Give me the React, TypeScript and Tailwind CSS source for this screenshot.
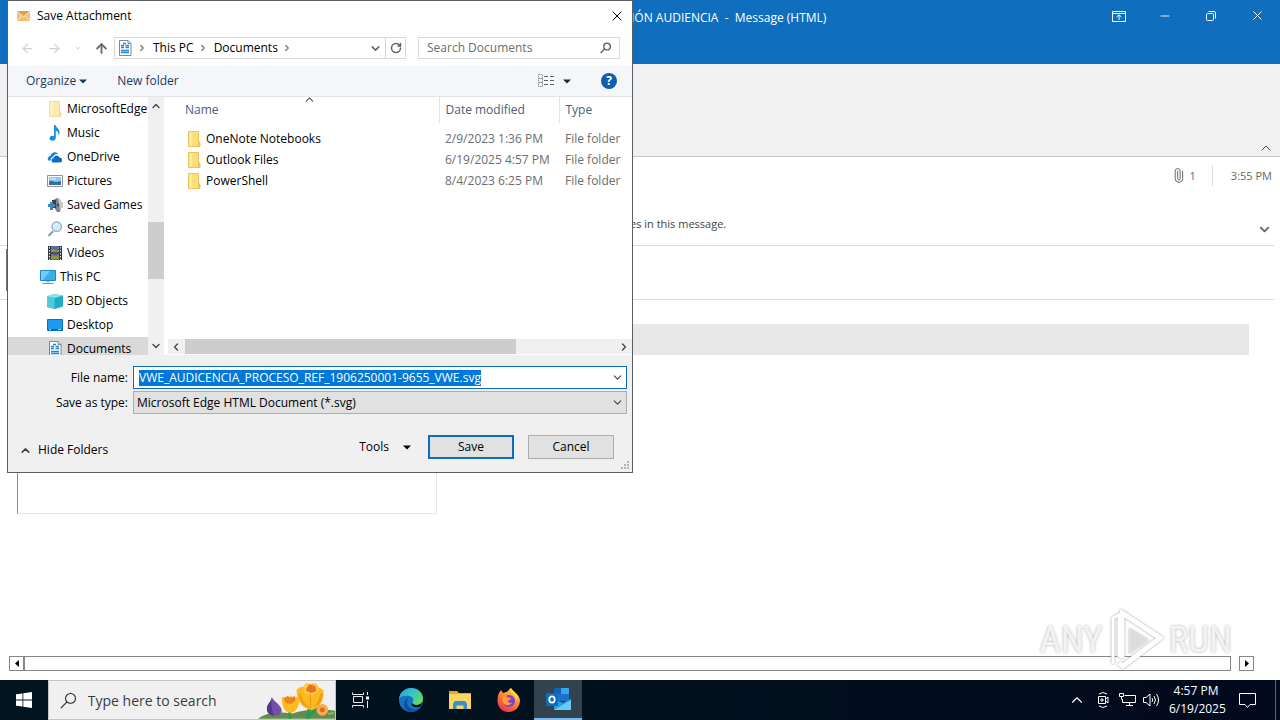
import { useEffect, useRef } from "react";
import type { ReactNode } from "react";
import { ArrowLeft, ArrowRight, ArrowUp, ChevronDown, ChevronLeft, ChevronRight, ChevronUp, Minus, Paperclip, RotateCw, X } from "lucide-react";

const FONT = "'Open Sans', 'Noto Sans', sans-serif";

/* ---------- icons ---------- */

function FolderIcon({ pale = false }: { pale?: boolean }) {
  return (
    <svg width="16" height="16" viewBox="0 0 16 16" opacity={pale ? 0.6 : 1}>
      <path d="M2.500.5h10v10l1.500 1v4H2.500z" fill="#fbdf7c" stroke="#e9c65c" />
      <path d="M12 10.500h2v5h-2z" fill="#f0c850" />
      <path d="M3 1h3v14H3z" fill="#fde99a" />
    </svg>
  );
}

function DocumentIcon() {
  return (
    <svg width="16" height="16" viewBox="0 0 16 16">
      <path d="M2.500.5h8.500l3 3v12H2.500z" fill="#fff" stroke="#7c8a94" />
      <path d="M11 .5v3h3" fill="none" stroke="#7c8a94" />
      <path d="M4 5.500h3M4 7.500h3M8.500 5.500H12M8.500 7.500H12M4 10.500h8M4 12.500h8M6 3.500h3" stroke="#1d86d4" strokeWidth="1.300" />
    </svg>
  );
}

function MusicIcon() {
  return (
    <svg width="16" height="16" viewBox="0 0 16 16">
      <path d="M7 0h1.500c.3 2.500 4.500 3.600 4 8-.1.900-.6 1.800-1.200 2.400.6-2.600-.6-4-2.500-4.600v7c0 1.700-1.500 3-3.400 3S2.500 14.800 2.500 13.300s1.400-2.600 3-2.600c.6 0 1 .1 1.500.3z" fill="#1d8fe1" />
    </svg>
  );
}

function OneDriveIcon() {
  return (
    <svg width="16" height="16" viewBox="0 0 16 16">
      <path d="M1 11.500C.3 8.700 2 7 3.500 6.800 4.200 3.500 8.500 1.800 11.300 5 8 4.500 6.500 6.500 6 8c-2 .3-2.500 2-2.200 3.500z" fill="#1a86d8" />
      <path d="M6.500 13.500c-2.400 0-2.800-4 0-4.300C7 6 11 5.200 12.500 8.500c3.400.2 3.400 4.800.5 5z" fill="#0a6cc4" />
    </svg>
  );
}

function PicturesIcon() {
  return (
    <svg width="16" height="16" viewBox="0 0 16 16">
      <path d="M.5 2.500h15v11H.5z" fill="#fff" stroke="#8b949c" />
      <path d="M2 4h12v8H2z" fill="#8cc9f2" />
      <path d="M2 8.500c3-2 5 .5 7 .5s3-1 5-.5V12H2z" fill="#3b6f93" />
      <path d="M3 5.500h6v1H3z" fill="#e6f5ff" />
    </svg>
  );
}

function SavedGamesIcon() {
  return (
    <svg width="16" height="16" viewBox="0 0 16 16">
      <path d="M7 2.500 10 1l3 1 1 3 2 1v4l-2 1-1 4h-3l-2-3z" fill="#7d868e" />
      <path d="M11 1.500 13 2l1 3 2 1v4l-2 1-1 3z" fill="#c5cbd0" />
      <path d="M5 3h4v8H5z" fill="#39434c" />
      <path d="M1 7h2V5h3v2h2v3H6v3H3v-3H1z" fill="#4688bd" />
      <circle cx="11" cy="8" r="1.500" fill="#4a535b" />
    </svg>
  );
}

function SearchesIcon() {
  return (
    <svg width="16" height="16" viewBox="0 0 16 16">
      <path d="M1.500 15 6 10.200" stroke="#8d9aa5" strokeWidth="2" />
      <circle cx="9.700" cy="5.700" r="4.700" fill="#d3ecfb" stroke="#8fb2cb" strokeWidth="1.400" />
      <path d="M7 5c.5-1.500 2-2.300 3.500-2" stroke="#fff" fill="none" />
    </svg>
  );
}

function VideosIcon() {
  return (
    <svg width="16" height="16" viewBox="0 0 16 16">
      <path d="M1 1h14v14H1z" fill="#333b45" />
      <path d="M4 1h8v14H4z" fill="#5b69b5" />
      <path d="M4 4.500c3-2 5 3 8 0V8H4zM4 11c3-2 5 2 8-1v4H4z" fill="#92963a" />
      <path d="M4 8h8" stroke="#20262d" />
      <path d="M2.500 2v13M13.500 2v13" stroke="#dfe5ea" strokeDasharray="1.500 1.500" />
    </svg>
  );
}

function ThisPcIcon() {
  return (
    <svg width="16" height="16" viewBox="0 0 16 16">
      <path d="M.5 1.500h15v10H.5z" fill="#38b0ee" stroke="#2085c4" />
      <path d="M1 2h9L3 11H1z" fill="#6fcdf8" />
      <path d="M6 12h4v1.500H6z" fill="#a9c5d6" />
      <path d="M2 14.500h12" stroke="#8595a0" />
    </svg>
  );
}

function ObjectsIcon() {
  return (
    <svg width="16" height="16" viewBox="0 0 16 16">
      <path d="M0 3.500 7 1l9 1.500v11L8 16l-8-2z" fill="#22acc4" />
      <path d="M0 3.500 7 1l9 1.500L7.500 5z" fill="#8ae3ec" />
      <path d="M0 3.500 7.500 5v11L0 14z" fill="#4fcbdc" />
    </svg>
  );
}

function DesktopIcon() {
  return (
    <svg width="16" height="16" viewBox="0 0 16 16">
      <path d="M.5 2.500h15v11H.5z" fill="#1e9bf0" stroke="#0f6fb8" />
      <path d="M1 12.500h14" stroke="#0c5c9c" />
      <path d="M2 12.500h2M11 12.500h3" stroke="#9ad4fa" />
    </svg>
  );
}

function MailIcon() {
  return (
    <svg width="13" height="10" viewBox="0 0 13 10">
      <path d="M0 0h13v10H0z" fill="#f3bd6c" />
      <path d="M0 0l6.500 5L13 0" fill="#e79d45" />
      <path d="M0 .5 6.500 6 13 .5M0 10l4.500-5M13 10 8.500 5" fill="none" stroke="#fdeed6" />
    </svg>
  );
}

function SearchGlyph({ size, stroke, width = 1 }: { size: number; stroke: string; width?: number }) {
  return (
    <svg width={size} height={size} viewBox="0 0 16 16" fill="none" stroke={stroke} strokeWidth={width}>
      <circle cx="10" cy="6" r="4.700" />
      <path d="M6.600 9.400.8 15.200" />
    </svg>
  );
}

function Triangle() {
  return (
    <svg width="8" height="5" viewBox="0 0 8 5">
      <path d="M0 .5h8l-4 4z" fill="currentColor" />
    </svg>
  );
}

function ViewIcon() {
  return (
    <svg width="17" height="14" viewBox="0 0 17 14" fill="none" stroke="#8a8f96">
      <path d="M.5.5h4v4h-4zM.5 4.500h4v4h-4zM.5 8.500h4v4h-4z" strokeDasharray="1.500 .7" />
      <path d="M6 2.500h4M12 2.500h4M6 6.500h4M12 6.500h4M6 10.500h4M12 10.500h4" stroke="#5f656c" />
    </svg>
  );
}

function Flowers() {
  return (
    <svg width="78" height="38" viewBox="0 0 78 38">
      <path d="M0 38c8-6 20-8 34-5 14-5 30-6 44-3v8z" fill="#628c4e" />
      <path d="M32 38c1-5 0-8-1-12M50 38c1-8 2-10 3-16M51 37c4-6 8-9 12-11" stroke="#2f9a50" strokeWidth="3" fill="none" />
      <path d="M14 16c2 5 10 8 10 14-1 4-5 5-8 5-4-1-7-3-7-7 0-5 4-6 5-12z" fill="#7650a6" />
      <path d="M14 16c-1 8 0 13 2 19-4-1-7-3-7-7 0-5 4-6 5-12z" fill="#573886" />
      <path d="M24 17c3-2 5-1 6 1l3-4 3 4c2-3 4-3 6-1 0 9-4 15-9 15-6 0-9-7-9-15z" fill="#fdbb22" />
      <path d="M26 17l4-2 3 2 4-2 1 4-4 4-6-1z" fill="#ee8420" />
      <path d="M39 9c3-3 5-4 7-3 1-4 4-4 7-3 4-2 7-1 8 3l5 3c1 11-4 19-12 20-9-1-15-9-15-20z" fill="#fdb91e" />
      <path d="M45 6l4-4 5 2 4-1 4 6-7 6-8-3z" fill="#ffce45" />
      <path d="M49 7l3-4 6 2 1 5-5 2-5-2z" fill="#e9731f" />
      <path d="M43 12c2 7 5 12 10 15-7-1-11-6-12-13zM63 12c-1 6-3 11-7 14 6-1 9-6 10-13z" fill="#f49d17" />
      <path d="M53 13v14" stroke="#e8941a" />
      <circle cx="65" cy="29" r="6" fill="#f8aa4c" />
      <circle cx="65" cy="29" r="2.500" fill="#dd6d1e" />
      <path d="M71 33l6-1" stroke="#8cbf62" strokeWidth="2" />
    </svg>
  );
}

function WindowsLogo() {
  return (
    <svg width="16" height="16" viewBox="0 0 16 16" fill="#fff">
      <path d="M0 2.300 6.500 1.400v6.200H0zM7.300 1.300 16 0v7.600H7.300zM0 8.400h6.500v6.200L0 13.700zM7.300 8.400H16V16l-8.700-1.300z" />
    </svg>
  );
}

function TaskViewIcon() {
  return (
    <svg width="17" height="16" viewBox="0 0 17 16" fill="none" stroke="#e8ecee">
      <path d="M.5.5v2h11v-2M.5 15.500v-2h11v2M1.500 4.500h9v6h-9zM15.500 0v3M15.500 9v7" />
      <path d="M14 4.500h3v3h-3z" fill="#fff" stroke="none" />
    </svg>
  );
}

function EdgeIcon() {
  return (
    <svg width="24" height="24" viewBox="0 0 24 24">
      <defs>
        <linearGradient id="edgeTop" x1="0" y1="0" x2="1" y2=".6">
          <stop offset="0" stopColor="#279fdb" />
          <stop offset=".6" stopColor="#38c9c0" />
          <stop offset="1" stopColor="#67d957" />
        </linearGradient>
      </defs>
      <circle cx="12" cy="12" r="12" fill="#1573c4" />
      <path d="M0 11C1 4 6 0 12 0c7 0 12 5 12 10.500 0 4-3 6.500-6.500 6.500-3 0-4.500-1.300-4-2.300 1.800-2 1-6.200-3.500-6.700C6 7.500 1.500 8 0 11z" fill="url(#edgeTop)" />
      <path d="M9.500 10C6.500 13 8 20 14 21.500c3 .7 6-.5 8-3C19 24 12 25 8 22.500 3.500 19.500 4 12 9.500 10z" fill="#0f4f99" />
      <path d="M13.500 14.700c-.5 1 1 2.300 4 2.300 2.500 0 4.500-1 5.600-2.500-.2 1.500-.7 2.800-1.500 4-5 2.500-11-1-8.100-3.800z" fill="#02141f" />
    </svg>
  );
}

function ExplorerIcon() {
  return (
    <svg width="22" height="18" viewBox="0 0 22 18">
      <path d="M0 0h8l2 2h12v16H0z" fill="#e9a52c" />
      <path d="M0 3h22v15H0z" fill="#fcd462" />
      <path d="M4 18v-5.500L6 10h10l2 2.500V18h-3.500v-3.500h-7V18z" fill="#3a8fd0" />
    </svg>
  );
}

function FirefoxIcon() {
  return (
    <svg width="24" height="24" viewBox="0 0 24 24">
      <defs>
        <linearGradient id="foxBody" x1=".8" y1="0" x2=".2" y2="1">
          <stop offset="0" stopColor="#ffe24a" />
          <stop offset=".45" stopColor="#ff8c2b" />
          <stop offset="1" stopColor="#f0285c" />
        </linearGradient>
      </defs>
      <path d="M2 5l2-3 2 3 3-1c2 0 3-3 5-4 1 4 8 5 9 12 0 7-5 12-11.500 12S.500 19 .500 13C.500 9 1 7 2 5z" fill="url(#foxBody)" />
      <circle cx="12" cy="13" r="6" fill="#7a43d6" />
      <path d="M6 9c2-2 4-1 5 .5l3 .5c0 2-2 2-3 2.500 0 2 2 3 4 2-1 3-7 4-9 0-1-2-1-4 0-5.500z" fill="#ff9a2e" />
      <path d="M14 4c3 2 5 5 5 8l2-3c0-3-4-5-7-9z" fill="#ffd93f" />
    </svg>
  );
}

function OutlookIcon() {
  return (
    <svg width="25" height="22" viewBox="0 0 25 22">
      <path d="M8 0h15v13H8z" fill="#1a73c8" />
      <path d="M15 0h8v6h-8z" fill="#35a6ee" />
      <path d="M8 0h7v6H8z" fill="#1462ae" />
      <path d="M8 11l9 4 8-4v11H8z" fill="#2aa0e2" />
      <path d="M8 22l17-10v10z" fill="#67cdf5" />
      <path d="M0 5h12v13H0z" fill="#0f6cbd" />
      <ellipse cx="6" cy="11.500" rx="2.700" ry="3.200" fill="none" stroke="#fff" strokeWidth="1.800" />
    </svg>
  );
}

/* ---------- save dialog ---------- */

const treeItems: { label: string; icon: ReactNode; root?: boolean; active?: boolean }[] = [
  { label: "MicrosoftEdge", icon: <FolderIcon pale /> },
  { label: "Music", icon: <MusicIcon /> },
  { label: "OneDrive", icon: <OneDriveIcon /> },
  { label: "Pictures", icon: <PicturesIcon /> },
  { label: "Saved Games", icon: <SavedGamesIcon /> },
  { label: "Searches", icon: <SearchesIcon /> },
  { label: "Videos", icon: <VideosIcon /> },
  { label: "This PC", icon: <ThisPcIcon />, root: true },
  { label: "3D Objects", icon: <ObjectsIcon /> },
  { label: "Desktop", icon: <DesktopIcon /> },
  { label: "Documents", icon: <DocumentIcon />, active: true },
];

const folders = [
  { name: "OneNote Notebooks", modified: "2/9/2023 1:36 PM" },
  { name: "Outlook Files", modified: "6/19/2025 4:57 PM" },
  { name: "PowerShell", modified: "8/4/2023 6:25 PM" },
];

function AddressBar() {
  return (
    <div className="flex h-9 items-center px-3">
      <div className="flex w-[94px] items-center gap-3 text-[#d2d2d2]">
        <button aria-label="Back"><ArrowLeft size={15} /></button>
        <button aria-label="Forward"><ArrowRight size={15} /></button>
        <button aria-label="Recent locations"><ChevronDown size={8} strokeWidth={3} /></button>
        <button aria-label="Up" className="text-[#6b6b6b]"><ArrowUp size={15} strokeWidth={3} /></button>
      </div>
      <div className="flex h-[22px] flex-1 items-center border border-[#d9d9d9] pl-0.5">
        <DocumentIcon />
        <ChevronRight size={10} strokeWidth={3} className="ml-1 text-[#777]" />
        <button className="ml-1.5">This PC</button>
        <ChevronRight size={10} strokeWidth={3} className="ml-1 text-[#777]" />
        <button className="ml-1.5">Documents</button>
        <ChevronRight size={10} strokeWidth={3} className="ml-1 text-[#777]" />
        <button aria-label="Previous locations" className="ml-auto mr-[3px] text-[#666]">
          <ChevronDown size={13} strokeWidth={3} />
        </button>
        <button aria-label="Refresh" className="flex h-full w-5 items-center justify-center border-l border-[#d9d9d9] text-[#666]">
          <RotateCw size={12} strokeWidth={3} />
        </button>
      </div>
      <div className="ml-3 flex h-[22px] w-[202px] items-center border border-[#d9d9d9] px-2">
        <input aria-label="Search Documents" placeholder="Search Documents" className="w-full min-w-0 outline-none placeholder:text-[#6d6d6d]" />
        <SearchGlyph size={12} stroke="#666" width={2} />
      </div>
    </div>
  );
}

function FolderTree() {
  return (
    <nav className="flex w-[156px] shrink-0">
      <ul className="w-[140px] overflow-hidden">
        {treeItems.map((item) => (
          <li key={item.label} className={item.active ? "bg-[#d9d9d9]" : ""}>
            <button className={`flex h-6 items-center gap-1 whitespace-nowrap ${item.root ? "pl-8" : "pl-[39px]"}`}>
              {item.icon}
              {item.label}
            </button>
          </li>
        ))}
      </ul>
      <div className="flex w-4 flex-col items-center bg-[#f0f0f0] text-[#505050]">
        <ChevronUp size={12} strokeWidth={3} className="mt-[3px]" />
        <div className="mt-[110px] h-[57px] w-full bg-[#cdcdcd]" />
        <ChevronDown size={12} strokeWidth={3} className="mb-[3px] mt-auto" />
      </div>
    </nav>
  );
}

function FileList() {
  return (
    <div className="flex min-w-0 flex-1 flex-col justify-between">
      <table className="w-full table-fixed border-collapse text-left">
        <thead className="text-[#4c607a]">
          <tr className="h-[26px]">
            <th className="relative pl-[21px] font-normal">
              Name
              <ChevronUp size={13} strokeWidth={2} className="absolute left-[139px] top-[-4px] text-[#555]" />
            </th>
            <th className="w-[120px] border-l border-[#e5e5e5] pl-1.5 font-normal">Date modified</th>
            <th className="w-[73px] border-l border-[#e5e5e5] pl-1.5 font-normal">Type</th>
          </tr>
        </thead>
        <tbody className="whitespace-nowrap text-[#6d6d6d] before:block before:h-[5px]">
          {folders.map((f) => (
            <tr key={f.name} className="h-[21px]">
              <td className="pl-[22px]">
                <div className="flex items-center gap-1 text-black">
                  <FolderIcon />
                  {f.name}
                </div>
              </td>
              <td className="pl-1.5">{f.modified}</td>
              <td className="pl-1.5">File folder</td>
            </tr>
          ))}
        </tbody>
      </table>
      <div className="mb-px ml-1 flex h-[15px] items-center bg-[#f0f0f0] text-[#505050]">
        <ChevronLeft size={12} strokeWidth={3} className="ml-0.5 mr-[3px]" />
        <div className="h-full w-[331px] bg-[#cdcdcd]" />
        <ChevronRight size={12} strokeWidth={3} className="ml-auto mr-0.5" />
      </div>
    </div>
  );
}

function SaveDialog() {
  const nameRef = useRef<HTMLInputElement>(null);

  useEffect(() => {
    nameRef.current?.focus();
    nameRef.current?.select();
  }, []);

  return (
    <div role="dialog" aria-label="Save Attachment" className="absolute left-[7px] top-0 w-[626px] border border-[#5a5f66] bg-white text-[12px] leading-4 text-black">
      <header className="flex h-[29px] items-center gap-[7px] pl-[9px] pr-[7px]">
        <MailIcon />
        <h2>Save Attachment</h2>
        <button aria-label="Close" className="ml-auto"><X size={16} strokeWidth={1.500} /></button>
      </header>

      <AddressBar />

      <div className="flex h-[31px] items-center border-b border-[#e5e5e5] bg-[#f4f6f9] pl-[18px] pr-[15px] text-[#1e395b]">
        <button className="flex items-center gap-[3px]">Organize <Triangle /></button>
        <button className="ml-[30px]">New folder</button>
        <button aria-label="Change view" className="ml-auto flex items-center gap-2 text-[#1e2a3b]">
          <ViewIcon />
          <Triangle />
        </button>
        <button aria-label="Help" className="ml-[30px] flex size-4 items-center justify-center rounded-full bg-[#0f5fae] text-[12px] font-bold text-white">?</button>
      </div>

      <div className="flex h-[258px] overflow-hidden">
        <FolderTree />
        <FileList />
      </div>

      <form className="bg-[#f0f0f0] pt-[11px]" onSubmit={(e) => e.preventDefault()}>
        <div className="grid grid-cols-[120px_1fr] items-center gap-x-[5px] gap-y-0.5 pr-[5px]">
          <label htmlFor="file-name" className="text-right">File name:</label>
          <div className="flex h-[23px] items-center border border-[#0f6cbd] bg-white pl-[5px] pr-0.5">
            <input
              id="file-name"
              ref={nameRef}
              defaultValue="VWE_AUDICENCIA_PROCESO_REF_1906250001-9655_VWE.svg"
              className="h-4 min-w-0 flex-1 outline-none selection:bg-[#0078d7] selection:text-white"
            />
            <ChevronDown size={13} className="text-[#444]" />
          </div>
          <label htmlFor="file-type" className="text-right">Save as type:</label>
          <div className="relative">
            <select id="file-type" className="block h-[23px] w-full appearance-none border border-[#adadad] bg-[#e1e1e1] pl-[3px]">
              <option>Microsoft Edge HTML Document (*.svg)</option>
            </select>
            <ChevronDown size={13} className="pointer-events-none absolute right-[3px] top-[5px] text-[#444]" />
          </div>
        </div>

        <div className="flex h-[58px] items-center pl-[11px] pr-[18px] pt-2">
          <button type="button" className="flex items-center gap-[6px] pt-1.5">
            <ChevronUp size={13} strokeWidth={3} className="text-[#444]" />
            Hide Folders
          </button>
          <button type="button" className="ml-auto flex items-center gap-[14px]">Tools <Triangle /></button>
          <button type="submit" className="ml-[17px] h-6 w-[86px] border-2 border-[#0f6cbd] bg-[#e1e1e1]">Save</button>
          <button type="button" className="ml-3.5 h-6 w-[86px] border border-[#adadad] bg-[#e1e1e1]">Cancel</button>
        </div>
      </form>
      <svg width="9" height="9" viewBox="0 0 9 9" fill="#b4b4b4" className="absolute bottom-0.5 right-0.5">
        <path d="M6 0h2v2H6zM3 3h2v2H3zM6 3h2v2H6zM0 6h2v2H0zM3 6h2v2H3zM6 6h2v2H6z" />
      </svg>
    </div>
  );
}

/* ---------- message window ---------- */

function MessageWindow() {
  return (
    <div className="flex flex-1 flex-col bg-white">
      <header className="flex h-16 items-start bg-[#106ebe] pr-[15px] text-white">
        <h1 className="whitespace-pre pl-[631px] pt-2.5 text-[12px] leading-4">IÓN AUDIENCIA  -  Message (HTML)</h1>
        <div className="ml-auto flex items-center gap-8 pt-2">
          <button aria-label="Ribbon display options">
            <svg width="14" height="14" viewBox="0 0 14 14" fill="none" stroke="#fff">
              <path d="M.5 2.500h13v10H.5zM.5 4.500h13M7 11V6M4.500 8 7 5.800 9.500 8" />
            </svg>
          </button>
          <button aria-label="Minimize"><Minus size={14} strokeWidth={1.500} /></button>
          <button aria-label="Restore">
            <svg width="14" height="14" viewBox="0 0 14 14" fill="none" stroke="#fff">
              <rect x="2.500" y="4.500" width="7" height="7" rx="1" />
              <path d="M4.500 2.500h5.500q1.500 0 1.500 1.500v5.500" />
            </svg>
          </button>
          <button aria-label="Close window"><X size={15} strokeWidth={1.500} /></button>
        </div>
      </header>

      <div className="flex h-[93px] items-end justify-end border-b border-[#c8c8c8] bg-[#f1f1f1] pr-1.5">
        <button aria-label="Collapse ribbon"><ChevronUp size={16} strokeWidth={1.500} className="text-[#444]" /></button>
      </div>

      <section className="mr-1.5 flex h-[89px] flex-col justify-between border-b border-[#dcdcdc] pb-2 pr-0.5 pt-2 text-[11px] leading-4 text-[#666]">
        <div className="flex items-center justify-end">
          <Paperclip size={15} strokeWidth={1.500} className="-rotate-45" />
          <span className="ml-1">1</span>
          <time className="ml-4 flex h-[21px] items-center border-l border-[#dcdcdc] pl-[18px]">3:55 PM</time>
        </div>
        <div className="flex items-end pl-[630px]">
          <p className="pb-[5px] text-[#444]">es in this message.</p>
          <button aria-label="Expand header" className="ml-auto"><ChevronDown size={15} strokeWidth={3} /></button>
        </div>
      </section>

      <div className="mr-1.5 h-[54px] border-b border-[#dcdcdc] pl-1.5 pt-[3px]">
        <div className="h-[42px] w-40 border border-[#777]" />
      </div>

      <div className="flex flex-1 flex-col pt-6">
        <div className="ml-[17px] mr-[31px] h-[31px] bg-[#e8e8e8]" />
        <div className="ml-[17px] mt-10 h-[119px] w-[420px] border-b border-l border-r border-[#e8e8e8] border-l-[#8f8f8f]" />
        <div className="mb-[9px] ml-[9px] mr-[26px] mt-auto flex h-[15px]">
          <button aria-label="Scroll left" className="flex w-[15px] items-center justify-center border border-[#868686]">
            <svg width="4" height="7" viewBox="0 0 4 7"><path d="M4 0v7L0 3.500z" /></svg>
          </button>
          <div className="mr-2 flex-1 border border-[#868686] bg-white" />
          <button aria-label="Scroll right" className="flex w-[15px] items-center justify-center border border-[#868686]">
            <svg width="4" height="7" viewBox="0 0 4 7"><path d="M0 0v7l4-3.500z" /></svg>
          </button>
        </div>
      </div>
    </div>
  );
}

function Watermark() {
  return (
    <div
      className="pointer-events-none absolute bottom-2 right-12 flex items-center gap-1 text-[37px] leading-[60px] text-white/80 [text-shadow:0_0_3px_#aaa]"
      style={{ fontFamily: "'Roboto Condensed', 'Liberation Sans Narrow', sans-serif" }}
    >
      ANY
      <svg width="58" height="64" viewBox="0 0 58 64" fill="none" className="drop-shadow-[0_0_1px_#999]">
        <path d="M6 56V10l6-3v42" stroke="#fff" strokeWidth="3" />
        <path d="M15 50V5l38 25-37 28-4-3" stroke="#fff" strokeWidth="5" />
        <path d="M22 20v26l20-14z" fill="#e8e8e8" opacity=".8" />
      </svg>
      RUN
    </div>
  );
}

/* ---------- taskbar ---------- */

function Taskbar() {
  return (
    <footer className="flex h-10 items-center bg-linear-to-r from-[#02151e] to-[#010a1c] text-white">
      <button aria-label="Start" className="flex h-full w-12 items-center justify-center"><WindowsLogo /></button>
      <label className="flex h-full w-72 items-center border border-[#c4c4c4] bg-[#f0f0f0] pl-[11px]">
        <SearchGlyph size={17} stroke="#222" />
        <input
          aria-label="Type here to search"
          placeholder="Type here to search"
          className="ml-[11px] w-[170px] text-[14px] text-black outline-none placeholder:text-[#3c3c3c]"
        />
        <Flowers />
      </label>
      <button aria-label="Task view" className="flex h-full w-12 items-center justify-center"><TaskViewIcon /></button>
      <button aria-label="Microsoft Edge" className="ml-0.5 flex h-full w-[49px] items-center justify-center"><EdgeIcon /></button>
      <button aria-label="File Explorer" className="flex h-full w-[49px] items-center justify-center"><ExplorerIcon /></button>
      <button aria-label="Firefox" className="flex h-full w-[49px] items-center justify-center"><FirefoxIcon /></button>
      <button aria-label="Outlook" className="ml-px flex h-full w-12 items-center justify-center border-b-2 border-[#76b9ed] bg-[#33434d]"><OutlookIcon /></button>

      <div className="ml-auto flex h-full items-center">
        <button aria-label="Show hidden icons" className="mr-[9px]"><ChevronUp size={18} strokeWidth={1.500} /></button>
        <svg width="16" height="18" viewBox="0 0 16 18" fill="none" stroke="#fff" className="mr-2">
          <path d="M3.500 5.500h7v7h-7zM10.500 8l2.500-2v6l-2.500-2M4 3q4-3 8 0M4 15q4 3 8 0M6 8h2v2H6z" />
        </svg>
        <svg width="17" height="16" viewBox="0 0 17 16" fill="none" stroke="#fff" className="mr-[7px]">
          <path d="M5.500 3.500h11v7H3.500V7M10.500 10.500v3M7 13.500h7M.5 1.500h4v3h-4zM2.500 4.500v3" />
        </svg>
        <svg width="17" height="16" viewBox="0 0 17 16" fill="none" stroke="#fff" className="mr-[9px]">
          <path d="M.5 5.500h2.500l4-3.500v12l-4-3.500H.5zM9 6q1.500 2 0 4M11 4q3 4 0 8M13.500 2q4 6 0 12" />
        </svg>
        <time className="w-[54px] text-center text-[12px] leading-[18px]">
          4:57 PM
          <br />
          6/19/2025
        </time>
        <button aria-label="Notifications" className="ml-4 mr-[19px]">
          <svg width="17" height="17" viewBox="0 0 17 17" fill="none" stroke="#fff">
            <path d="M.5 1.500h16v11h-5.500l-2.500 3-2.500-3H.5z" />
          </svg>
        </button>
        <div className="mr-1 h-full w-px bg-[#5c6670]" />
      </div>
    </footer>
  );
}

export default function App() {
  return (
    <div className="relative flex min-h-screen flex-col overflow-hidden" style={{ fontFamily: FONT }}>
      <main className="relative flex flex-1 flex-col">
        <MessageWindow />
        <SaveDialog />
        <Watermark />
      </main>
      <Taskbar />
    </div>
  );
}
